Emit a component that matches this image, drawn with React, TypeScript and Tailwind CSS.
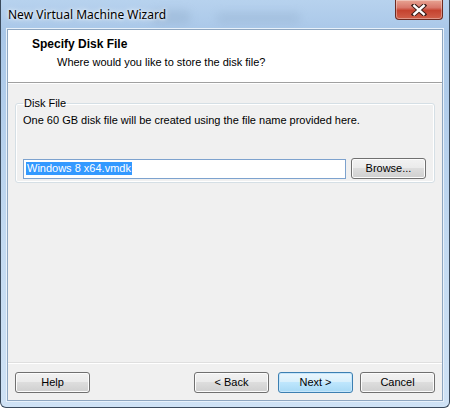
import React from 'react';

const titleFont = { fontFamily: '"Segoe UI", "Noto Sans", "Liberation Sans", sans-serif' };
const bodyFont = { fontFamily: '"Segoe UI", "Liberation Sans", Arial, sans-serif' };

function WinButton({ label, primary }: { label: string; primary?: boolean }) {
  return (
    <button
      type="button"
      className={
        'relative h-[21px] w-[75px] rounded-[3px] border text-[11px] leading-none text-black ' +
        (primary
          ? 'border-[#3c7fb1] bg-[linear-gradient(#eaf6fd_0%,#d9f0fc_45%,#bee6fd_50%,#a7d9f5_100%)] shadow-[inset_0_0_0_1px_#c6e6fb]'
          : 'border-[#707070] bg-[linear-gradient(#f2f2f2_0%,#ebebeb_45%,#dddddd_50%,#cfcfcf_100%)] shadow-[inset_0_0_0_1px_#fcfcfc]')
      }
    >
      {label}
    </button>
  );
}

function CloseButton() {
  return (
    <div className="absolute right-[6px] top-0 flex h-[20px] w-[48px] items-center justify-center rounded-b-[4px] border border-t-0 border-[#6d2a20] bg-[linear-gradient(#e8a493_0%,#d8776a_40%,#c5432f_55%,#d0604a_100%)] shadow-[inset_0_0_0_1px_rgba(255,255,255,0.35)]">
      <svg width="16" height="12" viewBox="0 0 16 12">
        <path d="M3 1.5 L13 10.5 M13 1.5 L3 10.5" stroke="#3b1d18" strokeWidth="4.4" strokeLinecap="square" />
        <path d="M3.3 1.8 L12.7 10.2 M12.7 1.8 L3.3 10.2" stroke="#ffffff" strokeWidth="2.4" strokeLinecap="square" />
      </svg>
    </div>
  );
}

export default function App() {
  return (
    <div
      className="relative flex h-[408px] w-[450px] flex-col overflow-hidden rounded-b-[6px] border-b border-l border-r border-[#3a4a5c] bg-[linear-gradient(180deg,#b7d2ee_0%,#a9c7e8_8%,#c3daf1_60%,#cfe2f5_100%)]"
      style={bodyFont}
    >
      {/* glass blur behind the title */}
      <div className="absolute left-[150px] top-[10px] h-[14px] w-[40px] rounded-full bg-[#7d98b6] opacity-25 blur-[4px]" />
      <div className="absolute left-[215px] top-[12px] h-[12px] w-[85px] rounded-full bg-[#7d98b6] opacity-20 blur-[4px]" />

      {/* title bar */}
      <div className="relative flex h-[29px] shrink-0 items-center pl-[7px] pt-[1px]" style={titleFont}>
        <span className="text-[12px] text-black [text-shadow:0_0_6px_#ffffff,0_0_3px_#ffffff]">
          New Virtual Machine Wizard
        </span>
      </div>
      <CloseButton />

      {/* client */}
      <div className="relative mx-[6px] mb-[6px] flex flex-1 flex-col border border-[#8ea6c0] shadow-[0_0_0_1px_#e8f1fa]">
        <div className="flex h-[53px] shrink-0 flex-col border-b border-[#a0a0a0] bg-white pl-[24px] pt-[6px]">
          <div className="text-[12px] font-bold leading-[16px] text-black">Specify Disk File</div>
          <div className="pl-[25px] pt-[2px] text-[11px] leading-[16px] text-black">
            Where would you like to store the disk file?
          </div>
        </div>

        <div className="flex flex-1 flex-col bg-[#f0f0f0] shadow-[inset_0_1px_0_#ffffff]">
          <fieldset className="mx-[7px] mt-[12px] rounded-[3px] border border-[#d5dfe5] px-[7px] pb-[3px] shadow-[inset_0_0_0_1px_#ffffff]">
            <legend className="px-[1px] text-[11px] leading-[16px] text-black">Disk File</legend>
            <div className="pt-[1px] text-[11px] leading-[16px] text-black">
              One 60 GB disk file will be created using the file name provided here.
            </div>
            <div className="mt-[30px] flex items-center gap-[5px]">
              <div className="flex h-[20px] w-[323px] items-center border border-[#7da2ce] bg-white pl-[2px]">
                <span className="bg-[#3399ff] px-[1px] text-[11px] leading-[13px] text-white">
                  Windows 8 x64.vmdk
                </span>
              </div>
              <WinButton label="Browse..." />
            </div>
          </fieldset>

          <div className="flex-1" />

          <div className="border-t border-[#dfdfdf] shadow-[0_1px_0_#ffffff]" />
          <div className="flex items-center px-[7px] pb-[7px] pt-[9px]">
            <WinButton label="Help" />
            <div className="flex-1" />
            <WinButton label="< Back" />
            <div className="w-[9px]" />
            <WinButton label="Next >" primary />
            <div className="w-[7px]" />
            <WinButton label="Cancel" />
          </div>
        </div>
      </div>
    </div>
  );
}
